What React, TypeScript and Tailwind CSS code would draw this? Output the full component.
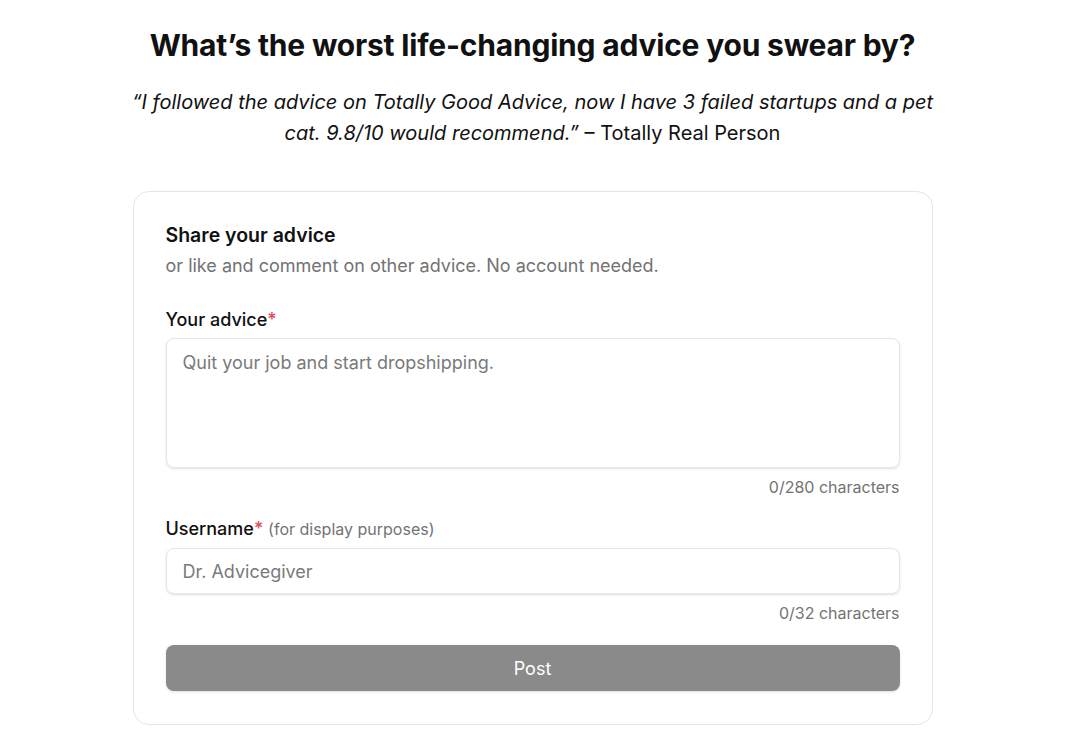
import React from 'react';

const App: React.FC = () => {
    return (
        <div className="min-h-screen bg-white pr-[15px]" style={{ fontFamily: 'Inter, "Noto Sans", sans-serif' }}>
            <div className="w-[800px] mx-auto pt-[27px]">
                <h1 className="text-center text-[30px] leading-[36px] font-bold text-[#111] tracking-[-0.2px]">
                    What’s the worst life-changing advice you swear by?
                </h1>
                <p className="-mx-[12px] mt-[24px] text-center text-[20px] leading-[31px] text-[#111]">
                    <span className="italic">
                        “I followed the advice on Totally Good Advice, now I have 3 failed startups and a pet cat. 9.8/10 would recommend.”
                    </span>{' '}
                    – Totally Real Person
                </p>

                <div className="mt-[42px] border border-[#e5e5e5] rounded-[16px] px-[32px] pt-[29px] pb-[33px]">
                    <h2 className="text-[19.5px] leading-[28px] font-semibold text-[#111]">Share your advice</h2>
                    <p className="mt-[4px] text-[18px] leading-[26px] text-[#737373]">
                        or like and comment on other advice. No account needed.
                    </p>

                    <div className="mt-[28px]">
                        <label className="block text-[18px] leading-[26px] font-medium text-[#111]">
                            Your advice<span className="text-[#e5484d]">*</span>
                        </label>
                        <textarea
                            className="mt-[5px] block w-full h-[130px] resize-none rounded-[8px] border border-[#e5e5e5] shadow-sm px-[16px] py-[11px] text-[18px] leading-[26px] placeholder:text-[#7a7a7a] outline-none"
                            placeholder="Quit your job and start dropshipping."
                        />
                        <p className="mt-[8px] text-right text-[16px] leading-[22px] text-[#737373]">0/280 characters</p>
                    </div>

                    <div className="mt-[18px]">
                        <label className="block text-[18px] leading-[26px] font-medium text-[#111]">
                            Username<span className="text-[#e5484d]">*</span>{' '}
                            <span className="text-[16px] font-normal text-[#737373]">(for display purposes)</span>
                        </label>
                        <input
                            className="mt-[6px] block w-full h-[46px] rounded-[8px] border border-[#e5e5e5] shadow-sm px-[16px] text-[18px] placeholder:text-[#7a7a7a] outline-none"
                            placeholder="Dr. Advicegiver"
                        />
                        <p className="mt-[8px] text-right text-[16px] leading-[22px] text-[#737373]">0/32 characters</p>
                    </div>

                    <button className="mt-[21px] w-full h-[46px] rounded-[8px] bg-[#8a8a8a] text-white text-[18px] font-normal shadow-sm">
                        Post
                    </button>
                </div>
            </div>
        </div>
    );
};

export default App;
